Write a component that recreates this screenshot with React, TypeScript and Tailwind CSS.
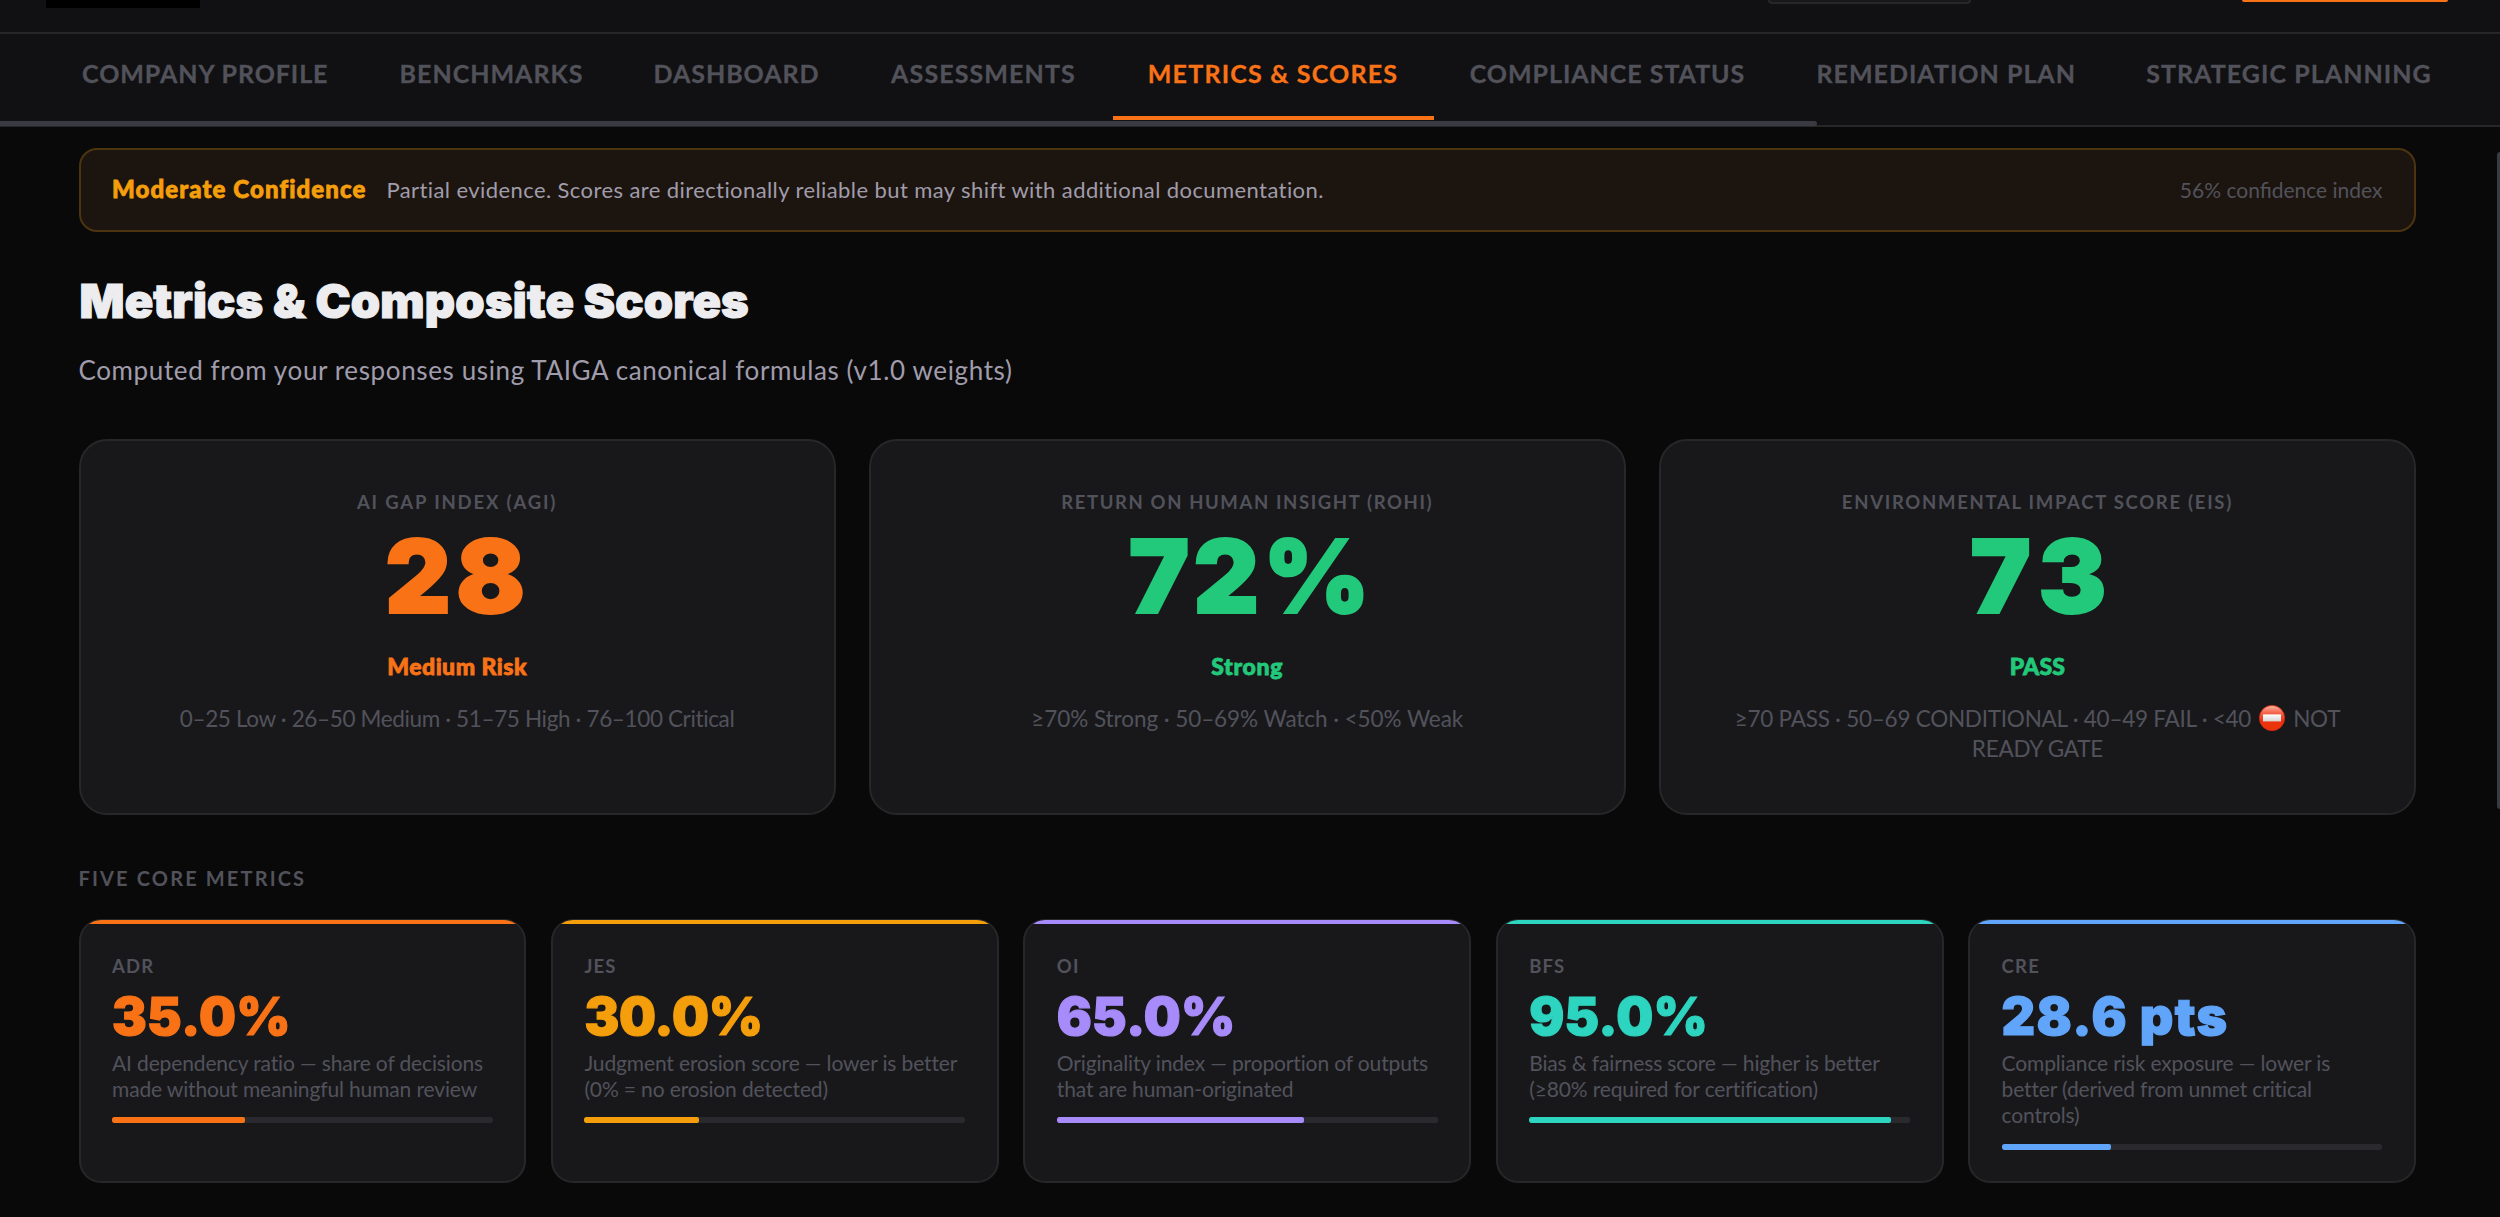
import React from "react";

const TABS = [
  { label: "COMPANY PROFILE", cls: "w-[318.5px] tracking-[0.92px]" },
  { label: "BENCHMARKS", cls: "w-[254px] tracking-[1px]" },
  { label: "DASHBOARD", cls: "w-[236px] tracking-[0.96px]" },
  { label: "ASSESSMENTS", cls: "w-[258px] tracking-[1.12px]" },
  { label: "METRICS & SCORES", cls: "w-[321px] tracking-[1.2px]", active: true },
  { label: "COMPLIANCE STATUS", cls: "w-[348px] tracking-[0.96px]" },
  { label: "REMEDIATION PLAN", cls: "w-[329.5px] tracking-[1px]" },
  { label: "STRATEGIC PLANNING", cls: "w-[356px] tracking-[1.05px]" },
];

function NoEntry() {
  return (
    <svg viewBox="0 0 26 26" className="mx-[8px] inline-block size-[26px] align-[-4px]" aria-label="no entry">
      <defs>
        <linearGradient id="sign" x1="0" y1="0" x2="0" y2="1">
          <stop offset="0" stopColor="#ffb8a6" />
          <stop offset="0.3" stopColor="#f4614a" />
          <stop offset="0.6" stopColor="#ea3411" />
          <stop offset="1" stopColor="#ee3205" />
        </linearGradient>
        <linearGradient id="bar" x1="0" y1="0" x2="0" y2="1">
          <stop offset="0" stopColor="#ffffff" />
          <stop offset="1" stopColor="#d6d3d3" />
        </linearGradient>
      </defs>
      <circle cx="13" cy="13" r="12.6" fill="url(#sign)" stroke="#d92c0b" strokeWidth="0.8" />
      <rect x="4" y="9.4" width="18" height="7" fill="url(#bar)" />
    </svg>
  );
}

const SCORES = [
  {
    label: "AI GAP INDEX (AGI)",
    labelCls: "tracking-[1.84px]",
    value: "28",
    valueCls: "pl-[1px] tracking-[5px]",
    status: "Medium Risk",
    statusCls: "tracking-[0.5px]",
    color: "text-[#f97316]",
    range: "0–25 Low · 26–50 Medium · 51–75 High · 76–100 Critical",
    rangeCls: "tracking-[-0.36px]",
  },
  {
    label: "RETURN ON HUMAN INSIGHT (ROHI)",
    labelCls: "tracking-[1.62px]",
    value: "72%",
    valueCls: "pl-[8px] tracking-[4px]",
    status: "Strong",
    statusCls: "tracking-[0.7px]",
    color: "text-[#22c97a]",
    range: "≥70% Strong · 50–69% Watch · <50% Weak",
    rangeCls: "tracking-[-0.07px]",
  },
  {
    label: "ENVIRONMENTAL IMPACT SCORE (EIS)",
    labelCls: "tracking-[1.71px]",
    value: "73",
    valueCls: "pl-[11px] tracking-[9px]",
    status: "PASS",
    statusCls: "tracking-[0.2px]",
    color: "text-[#22c97a]",
    range: (
      <>
        ≥70 PASS · 50–69 CONDITIONAL · 40–49 FAIL · &lt;40
        <NoEntry />
        NOT
        <br />
        READY GATE
      </>
    ),
    rangeCls: "tracking-[-0.25px]",
  },
];

const METRICS = [
  {
    code: "ADR",
    value: "35.0%",
    lines: ["AI dependency ratio — share of decisions", "made without meaningful human review"],
    pct: 35,
    text: "text-[#f97316]",
    bg: "bg-[#f97316]",
    track: "tracking-[0.3px]",
  },
  {
    code: "JES",
    value: "30.0%",
    lines: ["Judgment erosion score — lower is better", "(0% = no erosion detected)"],
    pct: 30,
    text: "text-[#f59e0b]",
    bg: "bg-[#f59e0b]",
    track: "tracking-[-0.1px]",
  },
  {
    code: "OI",
    value: "65.0%",
    lines: ["Originality index — proportion of outputs", "that are human-originated"],
    pct: 65,
    text: "text-[#a78bfa]",
    bg: "bg-[#a78bfa]",
    track: "tracking-[0.2px]",
  },
  {
    code: "BFS",
    value: "95.0%",
    lines: ["Bias & fairness score — higher is better", "(≥80% required for certification)"],
    pct: 95,
    text: "text-[#2dd4bf]",
    bg: "bg-[#2dd4bf]",
    track: "tracking-[0.2px]",
  },
  {
    code: "CRE",
    value: "28.6 pts",
    lines: ["Compliance risk exposure — lower is", "better (derived from unmet critical", "controls)"],
    pct: 28.6,
    text: "text-[#60a5fa]",
    bg: "bg-[#60a5fa]",
    track: "tracking-[1.4px]",
  },
];

export default function App() {
  return (
    <div className="relative h-[1217px] w-[2500px] overflow-hidden bg-[#09090a] font-['Lato',sans-serif] whitespace-nowrap">
      <header className="flex h-[34px] items-start border-b-2 border-[#27272a] bg-[#111113]">
        <div className="ml-[46px] h-[8px] w-[154px] bg-black" />
        <div className="ml-[1568px] h-[4px] w-[203px] rounded-b-lg border-2 border-t-0 border-[#27272a] bg-[#18181b]" />
        <div className="ml-[271px] h-[2px] w-[206px] rounded-b-sm bg-[#f97316]" />
      </header>

      <nav className="h-[93px] border-b-2 border-[#27272a] bg-[#111113]">
        <div className="flex h-[86px] pl-[46px]">
          {TABS.map((t) => (
            <div
              key={t.label}
              className={`${t.cls} shrink-0 border-b-4 pt-[24px] text-center text-[25px] leading-[30px] font-bold [-webkit-text-stroke:0.3px_currentColor] ${
                t.active ? "border-[#f97316] text-[#f97316]" : "border-transparent text-[#52525b]"
              }`}
            >
              {t.label}
            </div>
          ))}
        </div>
        <div className="mt-px h-[5px] w-[1817px] rounded-r-sm bg-[#3a3a42]" />
      </nav>

      <main className="pr-[84px] pl-[78.5px]">
        <div className="mt-[21px] flex h-[84px] items-center rounded-[18px] border-2 border-[#4d3411] bg-[#1c150f] px-[31.5px] pb-[3px]">
          <span className="text-[24px] leading-[30px] font-black tracking-[1.1px] text-[#f59e0b] [-webkit-text-stroke:0.8px_currentColor]">
            Moderate Confidence
          </span>
          <span className="ml-[20px] pt-[2px] text-[22px] leading-[30px] tracking-[0.41px] text-[#a09cab]">
            Partial evidence. Scores are directionally reliable but may shift with additional documentation.
          </span>
          <span className="ml-auto pt-[3px] text-[21px] leading-[30px] text-[#52525b]">56% confidence index</span>
        </div>

        <h1 className="mt-[41px] pl-[1px] font-['Inter',sans-serif] text-[47px] leading-[56px] font-black tracking-[0.2px] text-[#ededf0] [-webkit-text-stroke:1.2px_currentColor]">
          Metrics &amp; Composite Scores
        </h1>
        <p className="mt-[25px] text-[26px] leading-[32px] tracking-[0.62px] text-[#a09cab]">
          Computed from your responses using TAIGA canonical formulas (v1.0 weights)
        </p>

        <section className="mt-[53px] grid grid-cols-3 gap-[33px]">
          {SCORES.map((s) => (
            <div
              key={s.label}
              className="h-[376px] rounded-[28px] border-2 border-[#27272a] bg-[#18181b] pt-[49px] text-center"
            >
              <div className={`text-[18.5px] leading-[24px] font-bold text-[#52525b] ${s.labelCls}`}>{s.label}</div>
              <div
                className={`mt-[10px] font-['Inter',sans-serif] text-[102px] leading-[104px] font-black [-webkit-text-stroke:2px_currentColor] ${s.color} ${s.valueCls}`}
              >
                {s.value}
              </div>
              <div
                className={`mt-[24px] text-[23px] leading-[28px] font-black [-webkit-text-stroke:0.8px_currentColor] ${s.color} ${s.statusCls}`}
              >
                {s.status}
              </div>
              <div className={`mt-[24px] text-[22.5px] leading-[30px] text-[#52525b] ${s.rangeCls}`}>{s.range}</div>
            </div>
          ))}
        </section>

        <h2 className="mt-[51px] text-[20px] leading-[24px] font-bold tracking-[2.15px] text-[#52525b]">
          FIVE CORE METRICS
        </h2>

        <section className="mt-[29px] grid grid-cols-5 gap-[24.5px]">
          {METRICS.map((m) => (
            <div
              key={m.code}
              className="h-[264px] overflow-hidden rounded-[22px] border-2 border-t border-[#27272a] bg-[#18181b]"
            >
              <div className={`h-[4px] ${m.bg}`} />
              <div className="px-[31.5px] pt-[30px]">
                <div className="text-[18.5px] leading-[24px] font-bold tracking-[1.2px] text-[#52525b]">{m.code}</div>
                <div
                  className={`mt-[13px] font-['Inter',sans-serif] text-[52px] leading-[52px] font-black [-webkit-text-stroke:1.2px_currentColor] ${m.text} ${m.track}`}
                >
                  {m.value}
                </div>
                <div className="mt-[6.7px] text-[21px] leading-[26.3px] tracking-[-0.14px] text-[#52525b]">
                  {m.lines.map((l) => (
                    <div key={l}>{l}</div>
                  ))}
                </div>
                <div className="mt-[15px] h-[6px] overflow-hidden rounded-[2px] bg-[#2a2a2e]">
                  <div className={`h-full rounded-[2px] ${m.bg}`} style={{ width: `${m.pct}%` }} />
                </div>
              </div>
            </div>
          ))}
        </section>
      </main>

      <div className="absolute top-[152px] right-0 h-[657px] w-[3px] rounded-l-sm bg-[#3a3a42]" />
    </div>
  );
}
